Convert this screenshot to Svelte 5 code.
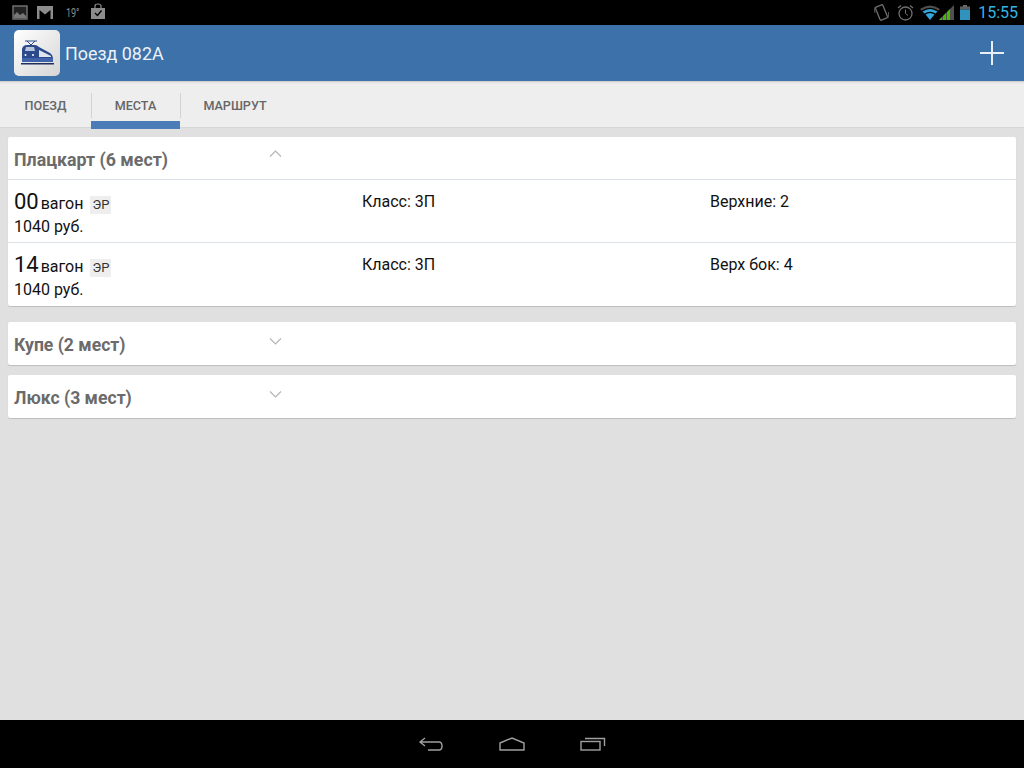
<script>
  const seats = [
    { car: "00", cls: "3П", place: "Верхние: 2", price: "1040 руб." },
    { car: "14", cls: "3П", place: "Верх бок: 4", price: "1040 руб." }
  ];
  const closed = ["Купе (2 мест)", "Люкс (3 мест)"];
</script>

<div class="screen">
  <div class="status">
    <div class="status-left">
      <svg class="ic" width="16" height="15" viewBox="0 0 16 15">
        <rect x="1" y="1" width="14" height="13" fill="#222" stroke="#777" stroke-width="1.4" />
        <path d="M2 13V10L5 7L8 10L11 8L14 11V13Z" fill="#777" />
      </svg>
      <svg class="ic gm" width="16" height="13" viewBox="0 0 16 13">
        <path d="M0 0H16V13H13.500V4L8 8.500L2.500 4V13H0Z" fill="#8c8c8c" />
      </svg>
      <span class="temp">19°</span>
      <svg class="ic bag" width="14" height="16" viewBox="0 0 14 16">
        <path d="M4 5V3Q4 1 7 1T10 3V5" fill="none" stroke="#8c8c8c" stroke-width="1.2" />
        <rect x="0" y="5" width="14" height="11" fill="#8c8c8c" />
        <path d="M4 10L6.500 12.500L10.500 7.500" fill="none" stroke="#000" stroke-width="1.4" />
      </svg>
    </div>
    <div class="status-right">
      <svg width="15" height="19" viewBox="0 0 15 19">
        <rect x="3.500" y="2.500" width="8" height="14" rx="1" transform="rotate(-22 7.500 9.500)" fill="none" stroke="#6e6e6e" stroke-width="1.300" />
        <path d="M1 4Q0 7 1 10M14.500 9Q15 12 14 15" fill="none" stroke="#5a5a5a" />
      </svg>
      <svg class="clock" width="17" height="17" viewBox="0 0 17 17">
        <circle cx="8.500" cy="9.500" r="6.500" fill="none" stroke="#6e6e6e" stroke-width="1.300" />
        <path d="M8.500 5.500V9.500L11 11.500" fill="none" stroke="#6e6e6e" />
        <path d="M1 4L4 1.500M16 4L13 1.500" stroke="#6e6e6e" stroke-width="1.300" />
      </svg>
      <svg class="wifi" width="20" height="15" viewBox="0 0 20 15">
        <path d="M0 4Q10 -3 20 4L18.500 5.500Q10 0 1.500 5.500Z" fill="#505050" />
        <path d="M2.500 6.500Q10 1.500 17.500 6.500L15.500 8.500Q10 5 4.500 8.500Z" fill="#33a5d8" />
        <path d="M5.500 9.500Q10 6.500 14.500 9.500L10 15Z" fill="#33a5d8" />
      </svg>
      <svg class="signal" width="15" height="15" viewBox="0 0 15 15">
        <path d="M0 15L15 0V15Z" fill="#505050" />
        <path d="M0 15L3 12V15ZM4 15V11L7 8V15ZM8 15V7L11 4V15Z" fill="#47b800" />
      </svg>
      <svg class="batt" width="10" height="15" viewBox="0 0 10 15">
        <rect x="3" y="0" width="4" height="2" fill="#6e6e6e" />
        <rect x="0" y="1.500" width="10" height="3" fill="#5e5e5e" />
        <rect x="0" y="4.500" width="10" height="10.500" fill="#2f93bd" />
      </svg>
      <span class="time">15:55</span>
    </div>
  </div>

  <header class="bar">
    <div class="logo">
      <svg width="34" height="26" viewBox="0 0 34 26">
        <path d="M5 1H17M7 1L11 5L15 1" fill="none" stroke="#2b4a8c" stroke-width="1" />
        <path d="M2 9Q3 5 7 5H15Q17 5 19 7L30 13Q33 15 33 18V22H2Z" fill="#2b4a8c" />
        <path d="M6 7H14L15 11H5Z" fill="#b9c4dc" />
        <path d="M19 10L31 16V17H19Z" fill="#dfe4ee" />
        <path d="M2 18H33V22H2Z" fill="#3f62a8" />
        <circle cx="5.500" cy="15" r="1" fill="#fff" />
        <circle cx="13" cy="15" r="1" fill="#fff" />
        <rect x="1" y="23" width="33" height="1.500" fill="#1d2f5c" />
      </svg>
    </div>
    <div class="title">Поезд 082А</div>
    <svg class="plus" width="24" height="24" viewBox="0 0 24 24">
      <path d="M0 12H24M12 0V24" stroke="#e8eef5" stroke-width="2" />
    </svg>
  </header>

  <nav class="tabs">
    <div class="tab first">ПОЕЗД</div>
    <div class="tab active">МЕСТА</div>
    <div class="tab last">МАРШРУТ</div>
  </nav>

  <main class="content">
    <section class="card open">
      <div class="head">
        <span class="name">Плацкарт (6 мест)</span>
        <svg class="chev up" width="13" height="7" viewBox="0 0 13 7">
          <path d="M1 6.500L6.500 1L12 6.500" fill="none" stroke="#b5b5b5" stroke-width="1.200" />
        </svg>
      </div>
      {#each seats as s}
        <div class="row">
          <div class="col">
            <div class="car"><span class="num">{s.car}</span> вагон <span class="tag">ЭР</span></div>
            <div class="price">{s.price}</div>
          </div>
          <div class="col info">Класс: {s.cls}</div>
          <div class="col info">{s.place}</div>
        </div>
      {/each}
    </section>

    {#each closed as name}
      <section class="card">
        <div class="head">
          <span class="name">{name}</span>
          <svg class="chev" width="13" height="7" viewBox="0 0 13 7">
            <path d="M1 .5L6.500 6L12 .5" fill="none" stroke="#b5b5b5" stroke-width="1.200" />
          </svg>
        </div>
      </section>
    {/each}
  </main>

  <footer class="nav">
    <svg width="26" height="14" viewBox="0 0 26 14">
      <path d="M7 1L2 5L7 9M2 5H21Q24 5 24 9T21 13H10" fill="none" stroke="#a0a0a0" stroke-width="1.400" />
    </svg>
    <svg width="26" height="14" viewBox="0 0 26 14">
      <path d="M1 6L13 1L25 6V13H1Z" fill="none" stroke="#a0a0a0" stroke-width="1.400" />
    </svg>
    <svg width="26" height="14" viewBox="0 0 26 14">
      <rect x="1" y="4.500" width="19" height="8.500" fill="none" stroke="#a0a0a0" stroke-width="1.400" />
      <path d="M5 1.500H24.500V9" fill="none" stroke="#a0a0a0" stroke-width="1.400" />
    </svg>
  </footer>
</div>

<style>
  :global(body) {
    margin: 0;
    font-family: Roboto, sans-serif;
  }

  .screen {
    width: 1024px;
    height: 768px;
    display: flex;
    flex-direction: column;
    background: #e0e0e0;
    overflow: hidden;
  }

  .status {
    height: 25px;
    flex: none;
    background: #000;
    display: flex;
    justify-content: space-between;
    align-items: center;
  }

  .status-left {
    display: flex;
    align-items: center;
    padding-left: 12px;
  }

  .gm {
    margin-left: 9px;
  }

  .temp {
    margin-left: 13px;
    width: 18px;
    font-size: 12px;
    color: #8c8c8c;
    transform: scaleX(0.75);
    transform-origin: left;
  }

  .bag {
    margin-left: 7px;
    margin-top: -3px;
  }

  .status-right {
    display: flex;
    align-items: center;
    padding-right: 6px;
  }

  .clock {
    margin-left: 8px;
  }

  .wifi {
    margin-left: 6px;
  }

  .signal {
    margin-left: -1px;
  }

  .batt {
    margin-left: 6px;
  }

  .time {
    margin-left: 8px;
    font-size: 16px;
    color: #33b5e5;
  }

  .bar {
    height: 56px;
    flex: none;
    background: #3d71aa;
    display: flex;
    align-items: center;
    padding: 0 20px 0 14px;
    box-sizing: border-box;
  }

  .logo {
    width: 46px;
    height: 46px;
    border-radius: 5px;
    background: linear-gradient(135deg, #ffffff, #d5d5d5);
    display: flex;
    align-items: center;
    justify-content: center;
  }

  .title {
    flex: 1;
    margin-left: 5px;
    font-size: 17.900px;
    color: #eef2f7;
  }

  .tabs {
    height: 47px;
    flex: none;
    box-sizing: border-box;
    background: #eeeeee;
    border-bottom: 1px solid #d6d6d6;
    box-shadow: inset 0 3px 2px -2px #c4c4c4;
    display: flex;
  }

  .tab {
    box-sizing: border-box;
    display: flex;
    justify-content: center;
    align-items: center;
    height: 46px;
    padding-top: 2px;
    font-size: 12.600px;
    font-weight: 500;
    color: #666;
    position: relative;
  }

  .tab.first {
    width: 91px;
  }

  .tab.active {
    width: 89px;
    height: 48px;
    padding-top: 8px;
    padding-bottom: 8px;
    background: linear-gradient(#4a7db8, #4a7db8) bottom / 100% 8px no-repeat;
  }

  .tab.active::before,
  .tab.active::after {
    content: "";
    position: absolute;
    top: 12px;
    height: 25px;
    width: 1px;
    background: #d2d2d2;
  }

  .tab.active::before {
    left: 0;
  }

  .tab.active::after {
    right: -1px;
  }

  .tab.last {
    width: 110px;
  }

  .content {
    flex: 1;
    padding: 9px 8px 0;
    display: flex;
    flex-direction: column;
    gap: 10px;
  }

  .card {
    background: #fff;
    border-radius: 2px;
    box-shadow: 0 1px 1px #bdbdbd;
  }

  .card.open {
    margin-bottom: 6px;
  }

  .head {
    height: 43px;
    display: flex;
    align-items: center;
    padding-left: 6px;
    position: relative;
  }

  .card.open .head {
    height: 42px;
  }

  .name {
    font-size: 17.600px;
    font-weight: 700;
    color: #6b6b6b;
    margin-top: 2px;
  }

  .card.open .name {
    font-size: 17.800px;
    margin-top: 3px;
  }

  .chev {
    position: absolute;
    left: 261px;
    top: 16px;
  }

  .chev.up {
    top: 13px;
  }

  .row {
    height: 63px;
    box-sizing: border-box;
    border-top: 1px solid #dde2e8;
    display: grid;
    grid-template-columns: 348px 348px 1fr;
    padding-left: 6px;
    color: #111;
    font-size: 16px;
  }

  .row:last-child {
    height: 64px;
  }

  .car {
    height: 24px;
    margin-top: 10px;
    display: flex;
    align-items: baseline;
    line-height: 24px;
    white-space: pre;
  }

  .num {
    font-size: 22px;
    margin-right: -2px;
  }

  .tag {
    margin-left: 3px;
    background: #eeeeee;
    padding: 0 2px;
    width: 17px;
    text-align: center;
    height: 18px;
    line-height: 18px;
    font-size: 13px;
    color: #333;
    align-self: flex-end;
  }

  .price {
    margin-top: 3px;
    line-height: 20px;
  }

  .info {
    margin-top: 12px;
    line-height: 20px;
  }

  .nav {
    height: 48px;
    flex: none;
    background: #000;
    display: flex;
    justify-content: center;
    align-items: center;
    gap: 55px;
  }
</style>
